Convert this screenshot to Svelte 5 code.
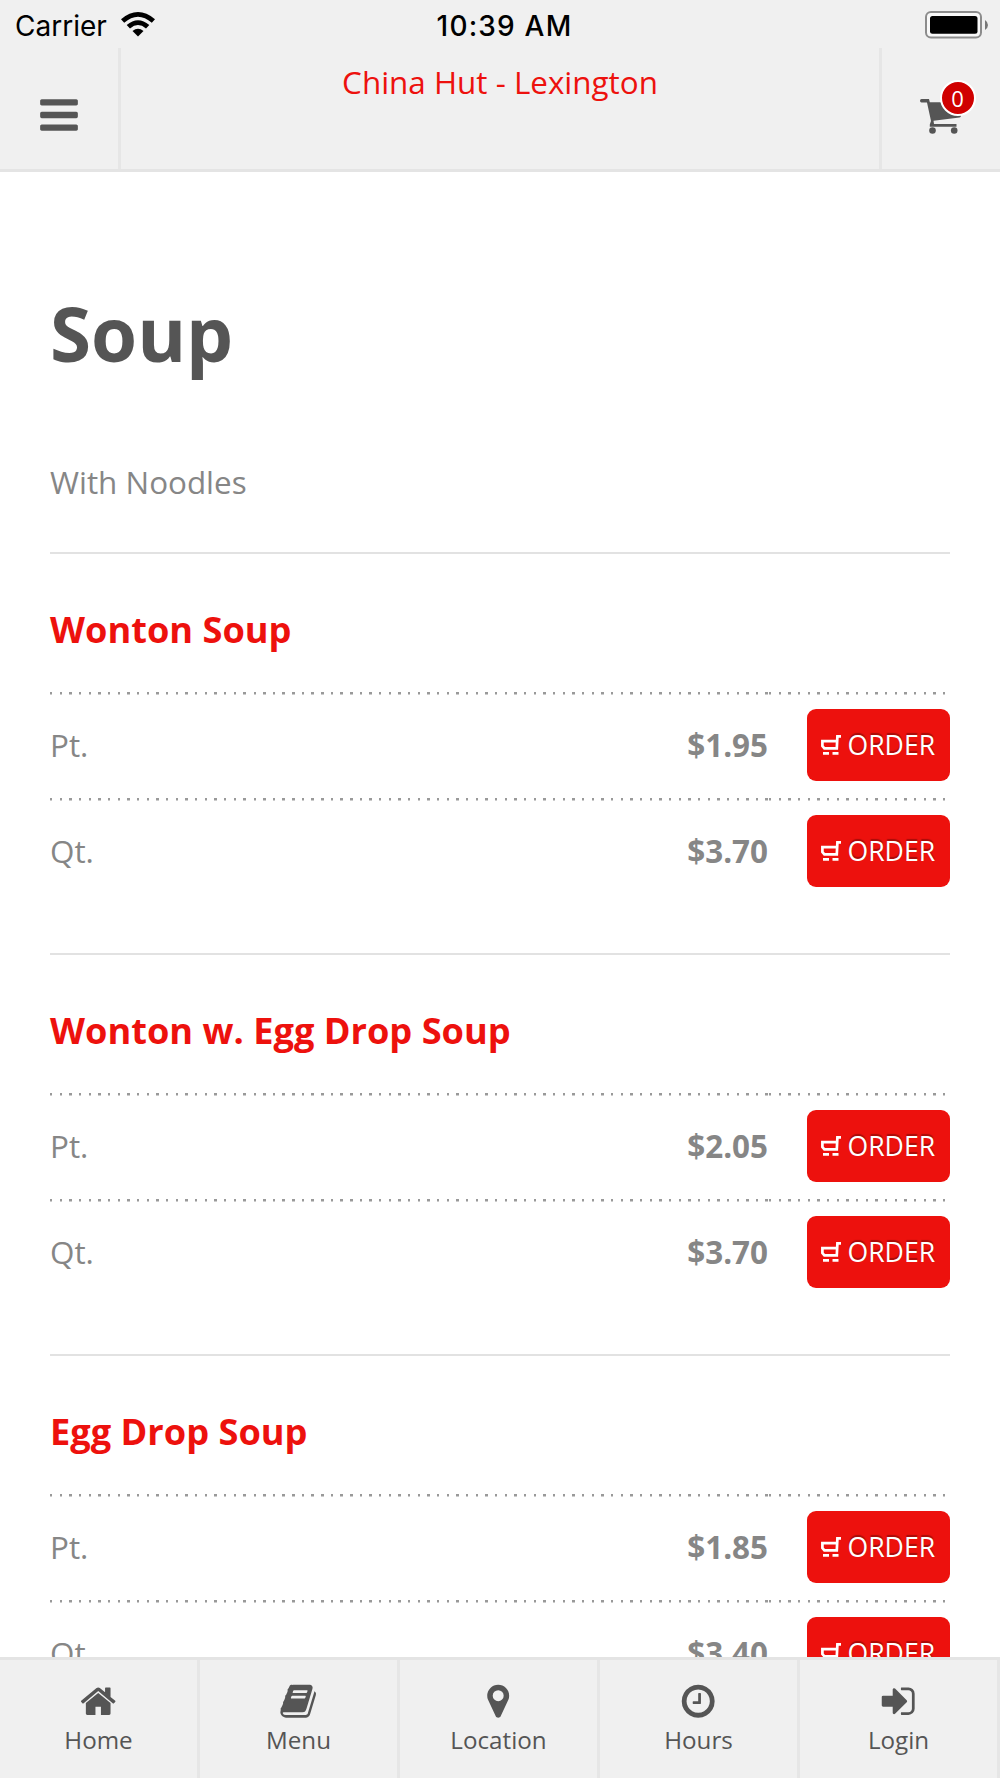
<script>
  const sections = [
    { name: 'Wonton Soup', rows: [['Pt.', '$1.95'], ['Qt.', '$3.70']] },
    { name: 'Wonton w. Egg Drop Soup', rows: [['Pt.', '$2.05'], ['Qt.', '$3.70']] },
    { name: 'Egg Drop Soup', rows: [['Pt.', '$1.85'], ['Qt.', '$3.40']] }
  ];
  const tabs = [
    { label: 'Home', d: 'M1472 992v480q0 26-19 45t-45 19h-384v-384h-256v384h-384q-26 0-45-19t-19-45v-480q0-1 .5-3t.5-3l575-474 575 474q1 2 1 6zm223-69l-62 74q-8 9-21 11h-3q-13 0-21-7l-692-577-692 577q-12 8-24 7-13-2-21-11l-62-74q-8-10-7-23.5t11-21.5l719-599q32-26 76-26t76 26l244 204v-195q0-14 9-23t23-9h192q14 0 23 9t9 23v408l219 182q10 8 11 21.5t-7 23.5z' },
    { label: 'Menu', d: 'M1703 478q40 57 18 129l-275 906q-19 64-76.5 107.5t-122.5 43.5h-923q-77 0-148.5-53.5t-99.5-131.5q-24-67-2-127 0-4 3-27t4-37q1-8-3-21.5t-3-19.5q2-11 8-21t16.5-23.5 16.5-23.5q23-38 45-91.5t30-91.5q3-10 .5-30t-.5-28q3-11 17-28t17-23q21-36 42-92t25-90q1-9-2.5-32t.5-28q4-13 22-30.5t22-22.5q19-26 42.5-84.5t27.5-96.5q1-8-3-25.5t-2-26.5q2-8 9-18t18-23 17-21q8-12 16.5-30.5t15-35 16-36 19.5-32 26.5-23.5 36-11.5 47.5 5.5l-1 3q38-9 51-9h761q74 0 114 56t18 130l-274 906q-36 119-71.5 153.5t-128.5 34.5h-869q-27 0-38 15-11 16-1 43 24 70 144 70h923q29 0 56-15.5t35-41.5l300-987q7-22 5-57 38 15 59 43zm-1064 2q-4 13 2 22.5t20 9.5h608q13 0 25.5-9.5t16.5-22.5l21-64q4-13-2-22.5t-20-9.5h-608q-13 0-25.5 9.5t-16.5 22.5zm-83 256q-4 13 2 22.5t20 9.5h608q13 0 25.5-9.5t16.5-22.5l21-64q4-13-2-22.5t-20-9.5h-608q-13 0-25.5 9.5t-16.5 22.5z' },
    { label: 'Location', d: 'M1152 640q0-106-75-181t-181-75-181 75-75 181 75 181 181 75 181-75 75-181zm256 0q0 109-33 179l-364 774q-16 33-47.5 52t-67.5 19-67.5-19-46.5-52l-365-774q-33-70-33-179 0-212 150-362t362-150 362 150 150 362z' },
    { label: 'Hours', d: 'M1024 544v448q0 14-9 23t-23 9h-320q-14 0-23-9t-9-23v-64q0-14 9-23t23-9h224v-352q0-14 9-23t23-9h64q14 0 23 9t9 23zm416 352q0-148-73-273t-198-198-273-73-273 73-198 198-73 273 73 273 198 198 273 73 273-73 198-198 73-273zm224 0q0 209-103 385.5t-279.5 279.5-385.5 103-385.5-103-279.5-279.5-103-385.5 103-385.5 279.5-279.5 385.5-103 385.5 103 279.5 279.5 103 385.5z' },
    { label: 'Login', d: 'M1312 896q0 26-19 45l-544 544q-19 19-45 19t-45-19-19-45v-288h-448q-26 0-45-19t-19-45v-384q0-26 19-45t45-19h448v-288q0-26 19-45t45-19 45 19l544 544q19 19 19 45zm352-352v704q0 119-84.5 203.5t-203.5 84.5h-320q-13 0-22.5-9.5t-9.5-22.5q0-4-1-20t-.5-26.5 3-23.5 10-19.5 20.5-6.5h320q66 0 113-47t47-113v-704q0-66-47-113t-113-47h-312l-11.5-1-11.5-3-8-5.5-7-9-2-13.5q0-4-1-20t-.5-26.5 3-23.5 10-19.5 20.5-6.5h320q119 0 203.5 84.5t84.5 203.5z' }
  ];
</script>

<div class="screen">
  <div class="status">
    <div class="carrier">
      <span>Carrier</span>
      <svg class="wifi" viewBox="0 0 34 25" width="34" height="25">
        <path d="M0 7.2Q17-7.2 34 7.2L30.8 10.8Q17-1.2 3.2 10.8Z" />
        <path d="M5.7 13Q17 3.4 28.3 13L25 16.5Q17 9.6 9 16.5Z" />
        <path d="M11.5 18.9Q17 14.6 22.5 18.9L17 24.6Z" />
      </svg>
    </div>
    <div class="time">10:39 AM</div>
    <svg class="battery" viewBox="0 0 64 28" width="64" height="28">
      <rect x="1" y="1" width="55" height="25.5" rx="5" fill="#f8f8f8" stroke="#8c8c8c" stroke-width="2" />
      <rect x="5" y="5" width="47.5" height="17.8" rx="2.5" fill="#000" />
      <path d="M60 9q3 2 3 5t-3 5z" fill="#777" />
    </svg>
  </div>
  <header>
    <div class="side left">
      <svg viewBox="0 0 1792 1792" width="44" height="44" fill="#555"><path d="M1664 1344v128q0 26-19 45t-45 19h-1408q-26 0-45-19t-19-45v-128q0-26 19-45t45-19h1408q26 0 45 19t19 45zm0-512v128q0 26-19 45t-45 19h-1408q-26 0-45-19t-19-45v-128q0-26 19-45t45-19h1408q26 0 45 19t19 45zm0-512v128q0 26-19 45t-45 19h-1408q-26 0-45-19t-19-45v-128q0-26 19-45t45-19h1408q26 0 45 19t19 45z" /></svg>
    </div>
    <div class="brand">China Hut - Lexington</div>
    <div class="side right">
      <div class="cart">
        <svg viewBox="0 0 42 36" width="42" height="36" fill="#555">
          <path d="M1.5 0H9L9.8 3.2H41V16.5Q41 18.3 39.5 18.6L13.5 21.8L14 25H36.5V27.8H9.8V25.5L11 22L7 3.4H1.5Q0 3.2 0 1.7T1.5 0Z" />
          <circle cx="12.5" cy="31.5" r="3.3" /><circle cx="34.2" cy="31.5" r="3.3" />
        </svg>
        <span class="badge">0</span>
      </div>
    </div>
  </header>

  <main>
    <h1>Soup</h1>
    <p class="note">With Noodles</p>
    {#each sections as s}
      <section>
        <h2>{s.name}</h2>
        {#each s.rows as [size, price]}
          <div class="row">
            <div class="cell">{size}</div>
            <div class="cell price">{price}</div>
            <div class="cell action">
              <button>
                <svg viewBox="0 0 20 20" width="20" height="20" fill="none" stroke="#fff" stroke-width="2.7">
                  <path d="M20 1.4H16.4L15.8 13.4H3.4L1.4 11V6.2H15.8" /><path d="M2 18.4H8M11.5 18.4H17.5" />
                </svg>
                <span>ORDER</span>
              </button>
            </div>
          </div>
        {/each}
      </section>
    {/each}
  </main>

  <nav>
    {#each tabs as t}
      <div class="tab">
        <svg viewBox="0 0 1792 1792" width="38.4" height="38.4" fill="#555"><path d={t.d} /></svg>
        <span>{t.label}</span>
      </div>
    {/each}
  </nav>
</div>

<style>
  .screen { width: 1000px; height: 1778px; display: flex; flex-direction: column; overflow: hidden; background: #fff; color: #868686; font-family: "Open Sans", sans-serif; font-size: 31.4px; }
  svg { display: block; flex: none; }
  .status { height: 48px; flex: none; background: #f0f0f0; color: #000; display: grid; grid-template-columns: 1fr auto 1fr; align-items: start; font-family: Inter, sans-serif; font-size: 28px; line-height: 34px; box-sizing: border-box; padding: 9px 11px 0 15px; }
  .carrier { display: flex; gap: 14px; }
  .wifi { margin-top: 3px; }
  .time { font-weight: 500; letter-spacing: 1.2px; padding-left: 5px; }
  .battery { justify-self: end; margin-top: 1.5px; }
  header { height: 121px; flex: none; background: #f0f0f0; border-bottom: 3px solid #e4e4e4; display: flex; }
  .side { width: 121px; display: flex; align-items: center; justify-content: center; box-sizing: border-box; flex: none; }
  .left { border-right: 3px solid #e6e6e6; padding-top: 13px; }
  .right { border-left: 3px solid #e6e6e6; padding-top: 16px; }
  .brand { flex: 1; text-align: center; color: #ed110d; line-height: 42px; padding-top: 13px; }
  .cart { position: relative; }
  .badge { position: absolute; left: 19.5px; top: -19px; width: 32px; height: 32px; border: 2px solid #fff; border-radius: 50%; background: #d00000; color: #fff; font-size: 22px; line-height: 32px; text-align: center; }
  main { flex: 1; min-height: 0; overflow: hidden; padding: 0 50px; }
  h1 { margin: 101px 0 0; font-size: 74.5px; line-height: 120px; color: #555; font-weight: 700; }
  .note { margin: 68px 0 0; line-height: 42px; height: 91px; }
  section { box-sizing: border-box; height: 401px; border-top: 2px solid #e2e2e2; padding-top: 50px; }
  h2 { margin: 0; font-size: 36.2px; line-height: 50px; height: 88px; color: #ed110d; font-weight: 700; }
  .row { display: grid; grid-template-columns: 194.3px 524.7px 181px; height: 106.2px; }
  .cell { background: repeating-linear-gradient(90deg, #999 0 2.4px, transparent 2.4px 9.66px) top / 100% 2.5px no-repeat; padding-top: 32px; line-height: 42px; }
  .price { text-align: right; font-weight: 700; padding-right: 1px; }
  .action { padding-top: 16.5px; display: flex; justify-content: flex-end; }
  button { width: 143px; height: 72.5px; border: 0; border-radius: 9px; background: #ed110d; color: #fff; font: 26.6px/36px "Open Sans", sans-serif; display: flex; align-items: center; padding: 0 0 0 14px; gap: 6.5px; text-shadow: 0 -2px 1px rgba(0,0,0,.3); }
  nav { height: 121px; box-sizing: border-box; flex: none; border-top: 3px solid #e4e4e4; background: #f0f0f0; display: grid; grid-template-columns: repeat(5, 1fr); }
  .tab { border-right: 3px solid #e6e6e6; display: flex; flex-direction: column; align-items: center; padding-top: 22px; color: #555; font-size: 24.2px; line-height: 39px; }
</style>
